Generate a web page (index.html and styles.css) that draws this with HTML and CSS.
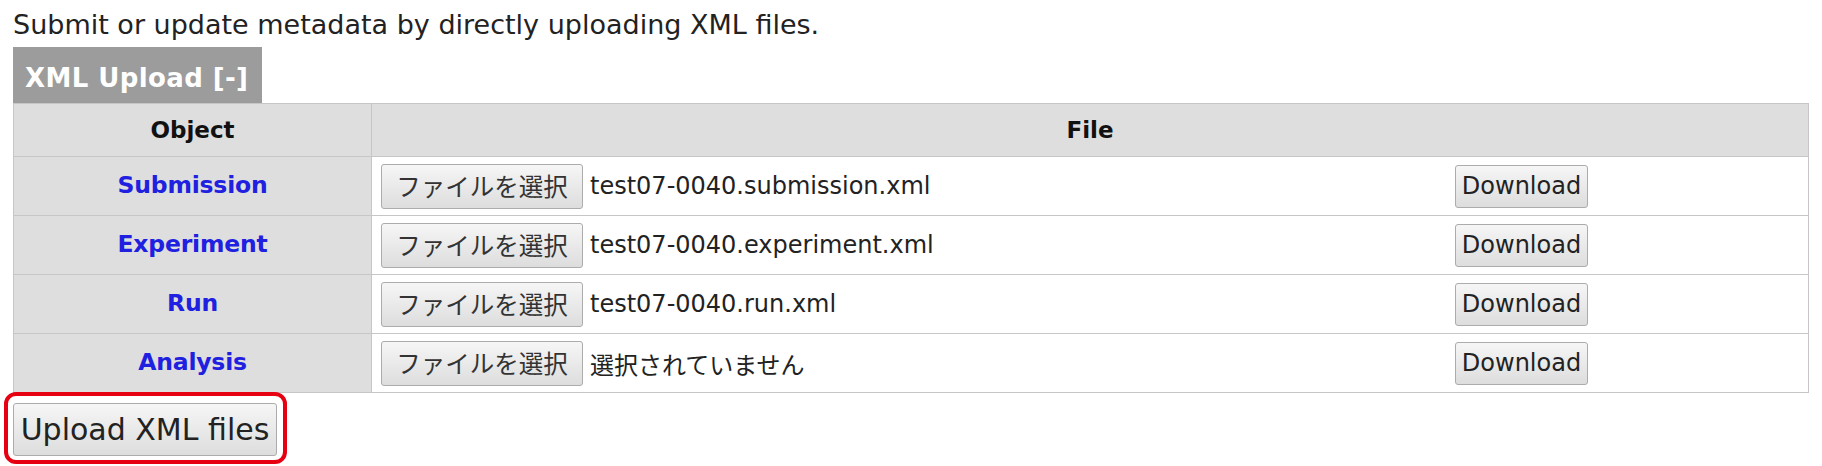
FILE: index.html
```html
<!DOCTYPE html>
<html lang="ja">
<head>
<meta charset="utf-8">
<title>XML Upload</title>
<link rel="stylesheet" href="styles.css">
</head>
<body>
<p class="intro">Submit or update metadata by directly uploading XML files.</p>
<div class="tab">XML Upload [-]</div>
<table class="xml-table">
  <thead>
    <tr><th class="col-object">Object</th><th class="col-file">File</th></tr>
  </thead>
  <tbody>
    <tr>
      <td class="obj"><a href="#">Submission</a></td>
      <td class="file"><div class="file-row"><div class="picker"><button class="btn btn-choose">ファイルを選択</button><span class="fname">test07-0040.submission.xml</span></div><button class="btn btn-dl">Download</button></div></td>
    </tr>
    <tr>
      <td class="obj"><a href="#">Experiment</a></td>
      <td class="file"><div class="file-row"><div class="picker"><button class="btn btn-choose">ファイルを選択</button><span class="fname">test07-0040.experiment.xml</span></div><button class="btn btn-dl">Download</button></div></td>
    </tr>
    <tr>
      <td class="obj"><a href="#">Run</a></td>
      <td class="file"><div class="file-row"><div class="picker"><button class="btn btn-choose">ファイルを選択</button><span class="fname">test07-0040.run.xml</span></div><button class="btn btn-dl">Download</button></div></td>
    </tr>
    <tr>
      <td class="obj"><a href="#">Analysis</a></td>
      <td class="file"><div class="file-row"><div class="picker"><button class="btn btn-choose">ファイルを選択</button><span class="fname jp">選択されていません</span></div><button class="btn btn-dl">Download</button></div></td>
    </tr>
  </tbody>
</table>
<div class="upload-frame"><button class="btn btn-upload">Upload XML files</button></div>
</body>
</html>
```
FILE: styles.css
```css
html, body {
  margin: 0;
  padding: 0;
  background: #fff;
}
body {
  padding: 9px 0 0 13px;
  font-family: "DejaVu Sans", "Noto Sans CJK JP", sans-serif;
  color: #222;
}
.intro {
  margin: 0;
  font-size: 27px;
  line-height: 31px;
  height: 31px;
}
.tab {
  display: block;
  width: fit-content;
  margin-top: 7px;
  height: 56px;
  box-sizing: border-box;
  padding: 6px 14px 0 12px;
  line-height: 50px;
  background: #9c9c9c;
  color: #fff;
  font-weight: bold;
  font-size: 26px;
  letter-spacing: 0.4px;
}
.xml-table {
  border-collapse: collapse;
  width: 1796px;
  table-layout: fixed;
}
.xml-table th,
.xml-table td {
  border: 1px solid #c6c6c6;
  padding: 0;
  box-sizing: border-box;
}
.xml-table th {
  background: #dedede;
  height: 53px;
  font-weight: bold;
  font-size: 23px;
  color: #111;
  text-align: center;
  vertical-align: middle;
}
.col-object {
  width: 358px;
}
.xml-table td {
  height: 59px;
  vertical-align: middle;
}
.obj {
  background: #dedede;
  text-align: center;
}
.obj a {
  color: #2020e0;
  text-decoration: none;
  font-weight: bold;
  font-size: 23.5px;
  letter-spacing: -0.2px;
  position: relative;
  top: -1px;
}
.file {
  background: #fff;
  padding-left: 9px !important;
}
.file-row {
  display: flex;
  align-items: center;
}
.picker {
  width: 1074px;
  flex: none;
  display: flex;
  align-items: center;
  gap: 7px;
}
.fname {
  font-size: 24px;
  color: #222;
}
.fname.jp {
  font-family: "Noto Sans CJK JP", sans-serif;
}
.btn {
  box-sizing: border-box;
  border: 1px solid #acacac;
  border-radius: 3px;
  background: linear-gradient(#f6f6f6, #dddddd);
  color: #222;
  padding: 0;
  margin: 0;
  font-family: "DejaVu Sans", "Noto Sans CJK JP", sans-serif;
  cursor: default;
}
.btn-choose {
  width: 202px;
  height: 45px;
  font-family: "Noto Sans CJK JP", sans-serif;
  font-size: 24.5px;
  line-height: 1;
  color: #333;
}
.btn-dl {
  width: 133px;
  height: 43px;
  font-size: 24px;
  line-height: 1;
}
.upload-frame {
  display: block;
  width: fit-content;
  margin: -1px 0 0 -9px;
  padding: 7px 6px 4px 5px;
  border: 4px solid #e60012;
  border-radius: 12px;
}
.btn-upload {
  display: block;
  width: 264px;
  height: 53px;
  font-size: 30px;
  line-height: 1;
}
```
